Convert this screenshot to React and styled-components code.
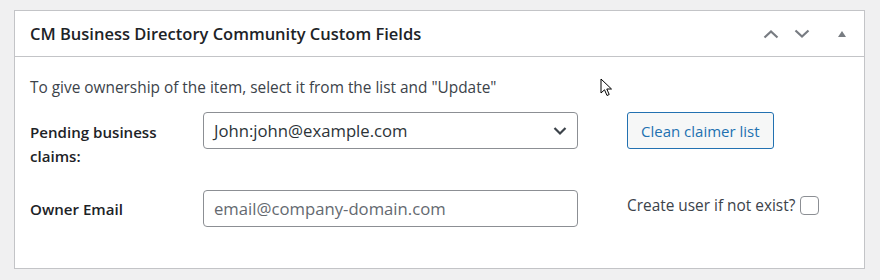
import React from "react";
import styled, { createGlobalStyle } from "styled-components";

const GlobalStyle = createGlobalStyle`
  html, body {
    margin: 0;
    padding: 0;
    background: #f0f0f1;
    font-family: "Open Sans", "Noto Sans", sans-serif;
    color: #3c434a;
  }
  * {
    box-sizing: border-box;
  }
`;

const Page = styled.div`
  position: relative;
  width: 880px;
  height: 280px;
  padding: 10px 15px 0 14px;
`;

const Postbox = styled.div`
  width: 851px;
  height: 259px;
  background: #fff;
  border: 1px solid #c3c4c7;
`;

const Header = styled.div`
  height: 46px;
  display: flex;
  align-items: center;
  padding: 0 0 0 15px;
  border-bottom: 1px solid #c3c4c7;
`;

const Title = styled.h2`
  flex: 1;
  margin: 0;
  font-size: 16.5px;
  font-weight: 600;
  color: #1d2327;
`;

const HandleActions = styled.div`
  display: flex;
  align-items: center;
  height: 100%;
`;

const HandleButton = styled.button`
  width: ${(p) => p.$w || 32}px;
  height: 36px;
  padding: 0;
  border: 0;
  background: none;
  display: flex;
  align-items: center;
  justify-content: center;
  color: #787c82;
`;

const Inside = styled.div`
  padding: 20px 15px 0 15px;
`;

const Intro = styled.p`
  margin: 0 0 13px;
  font-size: 15.4px;
  line-height: 22px;
  color: #3c434a;
`;

const FieldRow = styled.div`
  display: grid;
  grid-template-columns: 173px 375px auto;
  align-items: ${(p) => p.$align || "start"};
  margin-bottom: ${(p) => p.$mb || 0}px;
`;

const Label = styled.label`
  font-size: 15.1px;
  font-weight: 600;
  line-height: 24px;
  color: #1d2327;
  padding-top: ${(p) => p.$pt || 0}px;
`;

const SelectBox = styled.div`
  position: relative;
  height: 37px;
  border: 1px solid #8c8f94;
  border-radius: 4px;
  display: flex;
  align-items: center;
  padding: 0 10px;
  font-size: 16.7px;
  color: #2c3338;
  background: #fff;
`;

const SelectArrow = styled.span`
  position: absolute;
  right: 10px;
  top: 13px;
  display: flex;
`;

const TextInput = styled.input`
  height: 37px;
  width: 100%;
  border: 1px solid #8c8f94;
  border-radius: 4px;
  padding: 0 10px;
  font-family: inherit;
  font-size: 16.7px;
  color: #2c3338;
  background: #fff;
  outline: none;
  &::placeholder {
    color: #646970;
  }
`;

const SecondaryButton = styled.button`
  justify-self: start;
  margin-left: 49px;
  height: 37px;
  padding: 0 13px;
  border: 1px solid #2271b1;
  border-radius: 3px;
  background: #f6f7f7;
  color: #2271b1;
  font-family: inherit;
  font-size: 15px;
`;

const CheckLine = styled.label`
  display: flex;
  align-items: center;
  gap: 5px;
  margin-left: 49px;
  white-space: nowrap;
  font-size: 15.4px;
  color: #3c434a;
  padding-bottom: 6px;
`;

const CheckBox = styled.span`
  flex: none;
  width: 19px;
  height: 19px;
  border: 1px solid #8c8f94;
  border-radius: 4px;
  background: #fff;
`;

const Cursor = styled.svg`
  position: absolute;
  left: 600px;
  top: 78px;
`;

const Chevron = ({ up }) => (
  <svg width="16" height="10" viewBox="0 0 16 10">
    <path
      d={up ? "M1.5 8.5 L8 2.5 L14.5 8.5" : "M1.5 1.5 L8 7.5 L14.5 1.5"}
      fill="none"
      stroke="currentColor"
      strokeWidth="2.2"
    />
  </svg>
);

export default function App() {
  return (
    <Page>
      <GlobalStyle />
      <Postbox>
        <Header>
          <Title>CM Business Directory Community Custom Fields</Title>
          <HandleActions>
            <HandleButton $w={27}>
              <Chevron up />
            </HandleButton>
            <HandleButton $w={36}>
              <Chevron />
            </HandleButton>
            <HandleButton $w={44}>
              <svg width="10" height="8" viewBox="0 0 10 8">
                <path d="M5 1 L9 7 L1 7 Z" fill="currentColor" />
              </svg>
            </HandleButton>
          </HandleActions>
        </Header>
        <Inside>
          <Intro>
            To give ownership of the item, select it from the list and "Update"
          </Intro>
          <FieldRow $mb={22}>
            <Label $pt={8}>
              Pending business
              <br />
              claims:
            </Label>
            <SelectBox>
              John:john@example.com
              <SelectArrow>
                <svg width="14" height="10" viewBox="0 0 14 10">
                  <path
                    d="M1.5 2 L7 7.5 L12.5 2"
                    fill="none"
                    stroke="#3c434a"
                    strokeWidth="2.2"
                  />
                </svg>
              </SelectArrow>
            </SelectBox>
            <SecondaryButton>Clean claimer list</SecondaryButton>
          </FieldRow>
          <FieldRow $align="center">
            <Label>Owner Email</Label>
            <TextInput placeholder="email@company-domain.com" />
            <CheckLine>
              Create user if not exist?
              <CheckBox />
            </CheckLine>
          </FieldRow>
        </Inside>
      </Postbox>
      <Cursor width="14" height="20" viewBox="0 0 14 20">
        <path
          d="M1 1 L1 15 L4.5 11.8 L7 17.5 L9.2 16.5 L6.8 11 L11.5 11 Z"
          fill="#fff"
          stroke="#000"
          strokeWidth="1"
          strokeLinejoin="round"
        />
      </Cursor>
    </Page>
  );
}
